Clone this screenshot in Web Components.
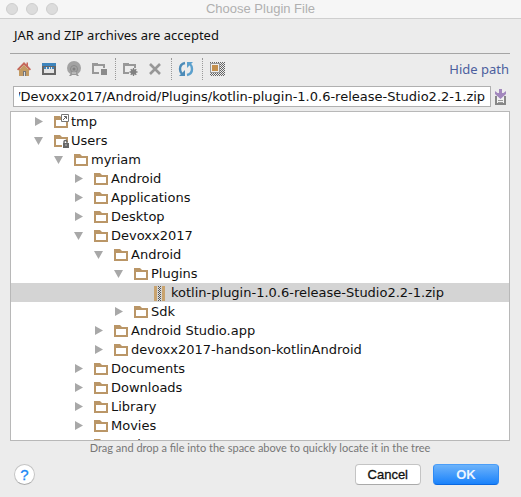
<!DOCTYPE html>
<html lang="en">
<head>
<meta charset="utf-8">
<title>Choose Plugin File</title>
<style>
html, body { margin: 0; height: 100%; }
body { background: #ececec; font: 13px/19px "Noto Sans", "Open Sans", sans-serif; color: #111; }
</style>
</head>
<body>
<file-dialog></file-dialog>

<script>
const icons = {
  home: `<svg width="16" height="16" viewBox="0 0 16 16"><path d="M3 8h10v7h-3v-4H7v4H3z" fill="#c39a62"/><path d="M8 1l2.500 2.500V1.500H12V5l3 3.300-1.200 1.200L8 4 2.200 9.500 1 8.300z" fill="#c5675a"/><path d="M4 8l4-4 4 4v1H4z" fill="#c39a62"/><path d="M7 10h3v5H7z" fill="#777"/><path d="M8 11h1v4H8z" fill="#ddd"/></svg>`,
  desktop: `<svg width="16" height="16" viewBox="0 0 16 16"><path d="M2 5h12v8H2z" fill="#e4e4e4" stroke="#666" stroke-width="2"/><path d="M1 2h14v3H1z" fill="#3e85bd"/><path d="M3 7h2M6 7h2M9 7h1M11 7h2" stroke="#3e85bd" stroke-width="2"/></svg>`,
  project: `<svg width="16" height="16" viewBox="0 0 16 16"><circle cx="8" cy="7" r="7" fill="#a2a2a2"/><path d="M3 15l3-4h4l3 4h-2l-1-1H6l-1 1z" fill="#989898"/><circle cx="8" cy="8" r="3.500" fill="none" stroke="#8a8a8a"/><circle cx="8" cy="8" r="1.500" fill="#808080"/><path d="M6 12h4" stroke="#ddd"/></svg>`,
  module: `<svg width="16" height="16" viewBox="0 0 16 16"><path d="M2 12V4h11v3M1 3h6M1 12h7" fill="none" stroke="#989898" stroke-width="2"/><path d="M10 8h6v6h-6z" fill="#8b8b8b"/></svg>`,
  newfolder: `<svg width="16" height="16" viewBox="0 0 16 16"><path d="M2 12V4h11v3M1 3h6M1 12h6" fill="none" stroke="#989898" stroke-width="2"/><path d="M11.500 7v8M7.500 11h8M8.700 8.200l5.600 5.600M14.300 8.200l-5.600 5.600" stroke="#808080" stroke-width="1.300"/><circle cx="11.500" cy="11" r="2.700" fill="#808080"/></svg>`,
  remove: `<svg width="16" height="16" viewBox="0 0 16 16"><path d="M3 3l10 10M13 3L3 13" stroke="#979797" stroke-width="2.600"/></svg>`,
  refresh: `<svg width="16" height="16" viewBox="0 0 16 16"><path d="M7 2Q2 3 2 8q0 3 2 5" fill="none" stroke="#4c8bb8" stroke-width="2.400"/><path d="M1 15h6V9z" fill="#4c8bb8"/><path d="M9 14q5-1 5-6 0-3-2-5" fill="none" stroke="#5ba0cd" stroke-width="2.400"/><path d="M15 1H9v6z" fill="#5ba0cd"/></svg>`,
  hidden: `<svg width="16" height="16" viewBox="0 0 16 16"><defs><pattern id="dots" width="2" height="2" patternUnits="userSpaceOnUse"><path d="M0 0h1v1H0zM1 1h1v1H1z" fill="#666"/></pattern></defs><path d="M1 1h15v14H1z" fill="url(#dots)" shape-rendering="crispEdges"/><path d="M1.500 2.500h9v9h-9z" fill="#eee" stroke="#999"/><path d="M3 4h6v6H3z" fill="#c48f4c"/></svg>`,
  history: `<svg width="16" height="16" viewBox="0 0 16 16"><path d="M3 7v8h9V7" fill="#f2f2f2" stroke="#878787" stroke-width="2"/><path d="M5 11.500h5M5 13.500h5" stroke="#999"/><path d="M6 0h3v4h1.500L13 2v3L7.500 10 2 5V2l2.500 2H6z" fill="#a287bd"/></svg>`,
  folder: `<svg width="16" height="16" viewBox="0 0 16 16"><path d="M1 2h6l2 2h6v10H1zM3 6v6h10V6z" fill="#ba9667" fill-rule="evenodd"/></svg>`,
  link: `<svg width="16" height="16" viewBox="0 0 16 16"><path d="M1 2h6l2 2h6v10H1zM3 6v6h10V6z" fill="#ba9667" fill-rule="evenodd"/><path d="M8.500.5h7v7h-7z" fill="#fff" stroke="#777"/><path d="M10 6l3.500-3.500M11 2.500h2.500V5" fill="none" stroke="#666"/></svg>`,
  locked: `<svg width="16" height="16" viewBox="0 0 16 16"><path d="M1 2h6l2 2h6v10H1zM3 6v6h10V6z" fill="#ba9667" fill-rule="evenodd"/><path d="M9 9h7v7H9z" fill="#fff"/><path d="M11 11V8.500q0-1 1.500-1t1.500 1V11" fill="none" stroke="#666" stroke-width="1.400"/><path d="M10 10h6v5h-6z" fill="#666"/><path d="M12 12h2" stroke="#bbb"/></svg>`,
  archive: `<svg width="16" height="16" viewBox="0 0 16 16" shape-rendering="crispEdges"><path d="M1 1h3v15H1zM9 1h3v15H9z" fill="#c9a36e"/><path d="M5 1h3v15H5z" fill="#ddd"/><path d="M5.500 1v15M7.500 1v15" stroke="#555" stroke-dasharray="1 1"/><path d="M6.500 2v14" stroke="#555" stroke-dasharray="1 1"/></svg>`
};

class UiIcon extends HTMLElement {
  connectedCallback() {
    this.attachShadow({ mode: "open" }).innerHTML =
      `<style>:host{display:block;flex:none;width:16px;height:16px}svg{display:block}</style>${icons[this.getAttribute("name")]}`;
  }
}
customElements.define("ui-icon", UiIcon);

class TitleBar extends HTMLElement {
  connectedCallback() {
    this.attachShadow({ mode: "open" }).innerHTML = `
      <style>
        :host { display: grid; grid-template-columns: 1fr auto 1fr; align-items: center; height: 18px; padding: 0 6px;
          background: #f6f6f6; border-bottom: 1px solid #cfcfcf; color: #b0b0b0; font: 13px/18px "Liberation Sans", Arial, sans-serif; }
        .lights { display: flex; gap: 8px; }
        i { box-sizing: border-box; width: 12px; height: 12px; border-radius: 50%; background: #dcdcdc; border: 1px solid #cecece; }
      </style>
      <span class="lights"><i></i><i></i><i></i></span><slot></slot>`;
  }
}
customElements.define("title-bar", TitleBar);

class ToolButton extends HTMLElement {
  connectedCallback() {
    this.attachShadow({ mode: "open" }).innerHTML = `
      <style>
        :host { display: block; flex: none; }
        button { display: block; padding: 0; border: 0; background: none; }
      </style>
      <button type="button" aria-label="${this.getAttribute("label")}"><ui-icon name="${this.getAttribute("icon")}"></ui-icon></button>`;
  }
}
customElements.define("tool-button", ToolButton);

class ToolBar extends HTMLElement {
  connectedCallback() {
    this.attachShadow({ mode: "open" }).innerHTML = `
      <style>
        :host { display: flex; align-items: center; height: 30px; padding: 0 1px 2px 6px; border-top: 1px solid #a5a5a5; }
        .group { display: flex; gap: 9px; padding-right: 8px; }
        .group + .group { border-left: 1px dotted #999; padding: 3px 8px 3px 6px; }
        a { margin-left: auto; color: #4c5f9e; text-decoration: none; }
      </style>
      <div class="group">
        <tool-button icon="home" label="Home"></tool-button>
        <tool-button icon="desktop" label="Desktop"></tool-button>
        <tool-button icon="project" label="Project"></tool-button>
        <tool-button icon="module" label="Module"></tool-button>
      </div>
      <div class="group">
        <tool-button icon="newfolder" label="New folder"></tool-button>
        <tool-button icon="remove" label="Delete"></tool-button>
      </div>
      <div class="group"><tool-button icon="refresh" label="Refresh"></tool-button></div>
      <div class="group"><tool-button icon="hidden" label="Show hidden files"></tool-button></div>
      <a href="#">Hide path</a>`;
  }
}
customElements.define("tool-bar", ToolBar);

class PathField extends HTMLElement {
  connectedCallback() {
    const root = this.attachShadow({ mode: "open" });
    root.innerHTML = `
      <style>
        :host { display: flex; align-items: center; gap: 2px; padding: 0 1px 0 3px; }
        input { flex: 1; min-width: 0; box-sizing: border-box; height: 21px; padding: 0 5px; border: 1px solid #b0b0b0;
          border-radius: 0; background: #fff; color: #111; font: 13px "DejaVu Sans", sans-serif; outline: 0; }
      </style>
      <input type="text" aria-label="Path" value="${this.getAttribute("value")}">
      <tool-button icon="history" label="Recent paths"></tool-button>`;
    const input = root.querySelector("input");
    input.scrollLeft = input.scrollWidth;
  }
}
customElements.define("path-field", PathField);

class TreeRow extends HTMLElement {
  connectedCallback() {
    const state = this.getAttribute("state");
    const arrow = { open: "M0 1h9L4.500 9z", closed: "M1 0v9l8-4.500z" }[state] || "";
    this.attachShadow({ mode: "open" }).innerHTML = `
      <style>
        :host { display: flex; align-items: center; height: 19px; white-space: nowrap;
          padding-left: calc(23px + 20px * var(--level)); }
        :host([selected]) { background: #d4d4d4; }
        .arrow { flex: none; width: 9px; height: 9px; margin-right: 10px; }
        ui-icon { margin-right: 2px; }
      </style>
      <svg class="arrow" viewBox="0 0 9 9"><path d="${arrow}" fill="#a8a8a8"/></svg>
      <ui-icon name="${this.getAttribute("icon") || "folder"}"></ui-icon><slot></slot>`;
    this.style.setProperty("--level", this.getAttribute("level"));
    this.setAttribute("role", "treeitem");
  }
}
customElements.define("tree-row", TreeRow);

class FileTree extends HTMLElement {
  connectedCallback() {
    this.attachShadow({ mode: "open" }).innerHTML = `
      <style>:host { display: block; flex: 1; min-height: 0; overflow: hidden; background: #fff; border: 1px solid #b8b8b8;
        font: 13px/19px "DejaVu Sans", sans-serif; }</style>
      <slot></slot>`;
    this.setAttribute("role", "tree");
  }
}
customElements.define("file-tree", FileTree);

class PushButton extends HTMLElement {
  connectedCallback() {
    this.attachShadow({ mode: "open" }).innerHTML = `
      <style>
        :host { display: block; }
        button { box-sizing: border-box; min-width: 66px; height: 21px; padding: 0 12px; border: 1px solid #c4c4c4; border-bottom-color: #aaa;
          border-radius: 4px; background: #fff; color: #111; font: 13px/18px "Liberation Sans", Arial, sans-serif; -webkit-text-stroke: 0.3px; display: block; }
        :host([primary]) button { border-color: #4b9ef8 #2f8bf5 #0a68e0; background: linear-gradient(#6db3fa, #1a82fb); color: #eef5ff; font-weight: bold; -webkit-text-stroke: 0; }
        :host([help]) button { min-width: 0; width: 21px; padding: 0; border-radius: 50%; color: #1b88f5; font-size: 15px; }
      </style>
      <button type="button"><slot></slot></button>`;
  }
}
customElements.define("push-button", PushButton);

class FileDialog extends HTMLElement {
  connectedCallback() {
    this.attachShadow({ mode: "open" }).innerHTML = `
      <style>
        :host { display: flex; flex-direction: column; height: 100vh; }
        main { flex: 1; min-height: 0; display: flex; flex-direction: column; padding: 0 11px 0 10px; }
        .message { margin: 0; padding: 7px 4px 8px; }
        path-field { margin-bottom: 4px; }
        .hint { margin: 0; color: #777; font: 11px/14px Lato, "Noto Sans", sans-serif; text-align: center; }
        footer { display: flex; align-items: center; gap: 12px; padding: 9px 22px 12px 14px; }
        .help { margin-right: auto; }
      </style>
      <title-bar>Choose Plugin File</title-bar>
      <main>
        <p class="message">JAR and ZIP archives are accepted</p>
        <tool-bar></tool-bar>
        <path-field value="/Users/myriam/Devoxx2017/Android/Plugins/kotlin-plugin-1.0.6-release-Studio2.2-1.zip"></path-field>
        <file-tree>
          <tree-row level="0" state="closed" icon="link">tmp</tree-row>
          <tree-row level="0" state="open" icon="locked">Users</tree-row>
          <tree-row level="1" state="open">myriam</tree-row>
          <tree-row level="2" state="closed">Android</tree-row>
          <tree-row level="2" state="closed">Applications</tree-row>
          <tree-row level="2" state="closed">Desktop</tree-row>
          <tree-row level="2" state="open">Devoxx2017</tree-row>
          <tree-row level="3" state="open">Android</tree-row>
          <tree-row level="4" state="open">Plugins</tree-row>
          <tree-row level="5" state="leaf" icon="archive" selected>kotlin-plugin-1.0.6-release-Studio2.2-1.zip</tree-row>
          <tree-row level="4" state="closed">Sdk</tree-row>
          <tree-row level="3" state="closed">Android Studio.app</tree-row>
          <tree-row level="3" state="closed">devoxx2017-handson-kotlinAndroid</tree-row>
          <tree-row level="2" state="closed">Documents</tree-row>
          <tree-row level="2" state="closed">Downloads</tree-row>
          <tree-row level="2" state="closed">Library</tree-row>
          <tree-row level="2" state="closed">Movies</tree-row>
          <tree-row level="2" state="closed">Music</tree-row>
        </file-tree>
        <p class="hint">Drag and drop a file into the space above to quickly locate it in the tree</p>
      </main>
      <footer>
        <push-button class="help" help>?</push-button>
        <push-button>Cancel</push-button>
        <push-button primary>OK</push-button>
      </footer>`;
  }
}
customElements.define("file-dialog", FileDialog);
</script>
</body>
</html>
